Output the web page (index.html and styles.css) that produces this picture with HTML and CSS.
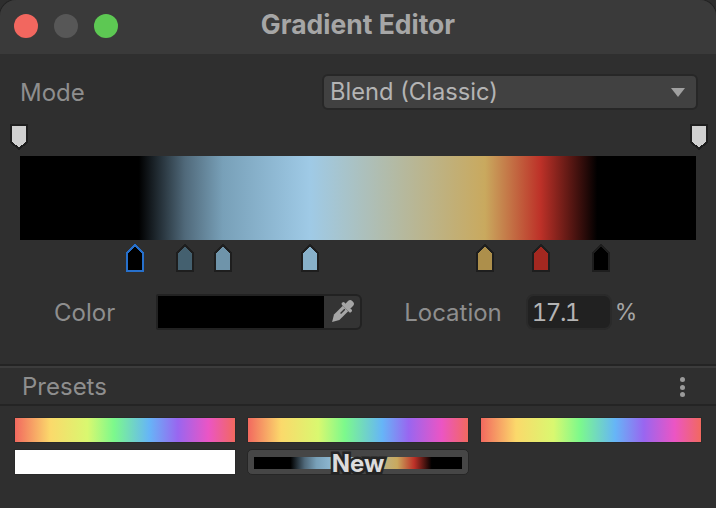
FILE: index.html
```html
<!DOCTYPE html>
<html lang="en">
<head>
    <meta charset="UTF-8">
    <meta name="viewport" content="width=device-width, initial-scale=1.0">
    <title>Gradient Editor</title>
    <link rel="stylesheet" href="styles.css">
</head>
<body>

    <svg class="defs" width="0" height="0" aria-hidden="true">
        <symbol id="stop-shape" viewBox="0 0 18 28">
            <polygon points="9,1 17,9 17,27 1,27 1,9" fill="currentColor" stroke="var(--edge)" stroke-width="2" shape-rendering="crispEdges"/>
        </symbol>
        <symbol id="alpha-shape" viewBox="0 0 18 26">
            <polygon points="1,1 17,1 17,18 9,25 1,18" fill="#d0d0d0" stroke="#1e1e1e" stroke-width="2" shape-rendering="crispEdges"/>
        </symbol>
    </svg>

    <div class="window">
        <div class="titlebar">
            <div class="lights">
                <span class="light light-close"></span>
                <span class="light light-min"></span>
                <span class="light light-max"></span>
            </div>
            <div class="title">Gradient Editor</div>
        </div>

        <div class="mode-row">
            <span class="label mode-label">Mode</span>
            <div class="dropdown">
                <span>Blend (Classic)</span>
                <span class="caret"></span>
            </div>
        </div>

        <div class="alpha-row">
            <svg class="alpha-handle"><use href="#alpha-shape"/></svg>
            <svg class="alpha-handle"><use href="#alpha-shape"/></svg>
        </div>

        <div class="gradient-bar gradient-main"></div>

        <div class="stops">
            <svg class="stop stop-selected" style="left: 17%"><use href="#stop-shape"/></svg>
            <svg class="stop stop-slate" style="left: 24.4%"><use href="#stop-shape"/></svg>
            <svg class="stop stop-steel" style="left: 30%"><use href="#stop-shape"/></svg>
            <svg class="stop stop-sky" style="left: 42.9%"><use href="#stop-shape"/></svg>
            <svg class="stop stop-sand" style="left: 68.8%"><use href="#stop-shape"/></svg>
            <svg class="stop stop-red" style="left: 77%"><use href="#stop-shape"/></svg>
            <svg class="stop stop-black" style="left: 85.9%"><use href="#stop-shape"/></svg>
        </div>

        <div class="color-row">
            <span class="label color-label">Color</span>
            <div class="color-field">
                <div class="color-swatch"></div>
                <div class="picker">
                    <svg width="30" height="30" viewBox="0 0 30 30">
                        <g transform="rotate(45 15 15)" fill="#a6a6a6">
                            <rect x="11.500" y="0" width="7" height="8" rx="3"/>
                            <rect x="8.500" y="6.500" width="13" height="3.500" rx="1.500"/>
                            <path d="M11.200 10h7.600v12.500L15 29l-3.800-6.500z"/>
                            <path d="M14.300 11h1.400v6h-1.400z" fill="#343434"/>
                        </g>
                    </svg>
                </div>
            </div>
            <span class="label location-label">Location</span>
            <div class="location-input">17.1</div>
            <span class="label percent">%</span>
        </div>

        <div class="presets-header">
            <span class="label">Presets</span>
            <div class="dots"><i></i><i></i><i></i></div>
        </div>

        <div class="presets">
            <div class="preset rainbow-a"></div>
            <div class="preset rainbow-b"></div>
            <div class="preset rainbow-a"></div>
            <div class="preset preset-white"></div>
            <div class="new-preset">
                <div class="new-bar gradient-main"></div>
                <span class="new-text">New</span>
            </div>
        </div>
    </div>

</body>
</html>
```

FILE: styles.css
```css
* {
    box-sizing: border-box;
}
html, body {
    margin: 0;
    height: 100%;
    overflow: hidden;
    background-color: #2e2e2e;
}
body {
    font-family: Inter, "Noto Sans", sans-serif;
}
.defs {
    position: absolute;
}
.window {
    height: 508px;
    background-color: #2f2f2f;
    border-radius: 16px 16px 0 0;
    box-shadow: 0 0 0 1px #232323;
    overflow: hidden;
}
.titlebar {
    height: 54px;
    background-color: #3a3a3a;
    display: flex;
    align-items: center;
    position: relative;
}
.lights {
    display: flex;
    gap: 16px;
    padding-left: 14px;
    margin-top: -2px;
}
.light {
    width: 24px;
    height: 24px;
    border-radius: 50%;
}
.light-close {
    background-color: #f2675f;
}
.light-min {
    background-color: #575757;
}
.light-max {
    background-color: #5dc853;
}
.title {
    position: absolute;
    left: 0;
    right: 0;
    top: 8px;
    text-align: center;
    font-size: 26.500px;
    font-weight: 700;
    color: #a6a6a6;
}
.label {
    font-size: 24px;
    color: #8e8e8e;
}
.mode-label {
    margin-left: -1px;
}
.mode-row {
    display: flex;
    align-items: center;
    justify-content: space-between;
    padding: 20px 18px 0 21px;
}
.dropdown {
    width: 376px;
    height: 36px;
    background-color: #414141;
    border: 2px solid #272727;
    border-radius: 6px;
    display: flex;
    align-items: center;
    justify-content: space-between;
    padding: 0 11px 2px 6px;
    font-size: 23.700px;
    color: #b4b4b4;
}
.caret {
    width: 0;
    height: 0;
    margin-top: 2px;
    border-left: 7.500px solid transparent;
    border-right: 7.500px solid transparent;
    border-top: 9px solid #a0a0a0;
}
.alpha-row {
    display: flex;
    justify-content: space-between;
    padding: 14px 8px 0 10px;
    height: 40px;
}
.alpha-handle {
    width: 18px;
    height: 26px;
}
.gradient-bar {
    height: 84px;
    margin: 6px 20px 0;
}
.gradient-main {
    background: linear-gradient(90deg, #000 17.6%, #50697a 24.4%, #78a0b8 30%, #9fcae6 42.9%, #c9a95e 68.8%, #bd3128 77%, #000 85.4%);
}
.stops {
    position: relative;
    height: 28px;
    margin: 4px 20px 0;
}
.stop {
    position: absolute;
    top: 0;
    width: 18px;
    height: 28px;
    margin-left: -9px;
    --edge: #1e1e1e;
}
.stop-selected {
    color: #000;
    --edge: #2770cc;
}
.stop-slate {
    color: #44606f;
}
.stop-steel {
    color: #6f94aa;
}
.stop-sky {
    color: #87b0c9;
}
.stop-sand {
    color: #ad8f4b;
}
.stop-red {
    color: #a32820;
}
.stop-black {
    color: #000;
}
.color-row {
    display: flex;
    align-items: center;
    height: 36px;
    margin-top: 22px;
    padding-left: 54px;
}
.color-field {
    width: 206px;
    height: 36px;
    margin-left: 41px;
    border: 2px solid #222;
    border-radius: 2px 6px 6px 2px;
    background-color: #343434;
    display: flex;
    overflow: hidden;
}
.color-swatch {
    width: 166px;
    background-color: #000;
}
.picker {
    flex: 1;
    display: flex;
    align-items: center;
    justify-content: center;
}
.location-label {
    margin-left: 42px;
}
.location-input {
    width: 86px;
    height: 36px;
    margin-left: 24px;
    border: 2px solid #2a2a2a;
    border-radius: 8px;
    background-color: #212121;
    padding-left: 4px;
    line-height: 34px;
    font-size: 24px;
    letter-spacing: -1.500px;
    font-variant-numeric: tabular-nums;
    color: #b4b4b4;
}
.percent {
    margin-left: 3px;
    font-size: 23px;
    color: #a6a6a6;
}
.presets-header {
    height: 42px;
    margin-top: 34px;
    border-top: 2px solid #242424;
    border-bottom: 2px solid #242424;
    box-shadow: inset 0 2px 0 #3c3c3c;
    display: flex;
    align-items: center;
    justify-content: space-between;
    padding: 2px 31px 0 22px;
}
.dots {
    display: flex;
    flex-direction: column;
    gap: 2.500px;
    margin-top: 2px;
}
.dots i {
    width: 5px;
    height: 5px;
    border-radius: 50%;
    background-color: #9a9a9a;
}
.presets {
    display: grid;
    grid-template-columns: repeat(3, 220px);
    grid-auto-rows: 24px;
    column-gap: 13px;
    row-gap: 8px;
    padding: 12px 15px 0;
}
.preset {
    box-shadow: 0 0 0 1px #2a2a2a;
}
.rainbow-a {
    background: linear-gradient(90deg, #f2695f 0%, #fbd96b 16%, #d9f870 33%, #7cf98c 45%, #66b5f7 61%, #9966f0 74%, #eb55c4 88%, #f2695f 100%);
}
.rainbow-b {
    background: linear-gradient(90deg, #f2695f 0%, #fbd96b 15%, #d9f870 32%, #7cf98c 44%, #66b5f7 61%, #9966f0 73%, #eb55c4 88%, #f2695f 100%);
}
.preset-white {
    background-color: #fff;
}
.new-preset {
    display: grid;
    place-items: center;
    margin: -1px;
    padding: 6px 6px;
    background-color: #464646;
    border: 1px solid #262626;
    border-radius: 5px;
}
.new-bar, .new-text {
    grid-area: 1 / 1;
}
.new-bar {
    width: 100%;
    height: 12px;
}
.new-text {
    margin-top: 2px;
    font-size: 24px;
    line-height: 12px;
    font-weight: 700;
    color: #dcdcdc;
    -webkit-text-stroke: 5px #242424;
    paint-order: stroke fill;
}
```
